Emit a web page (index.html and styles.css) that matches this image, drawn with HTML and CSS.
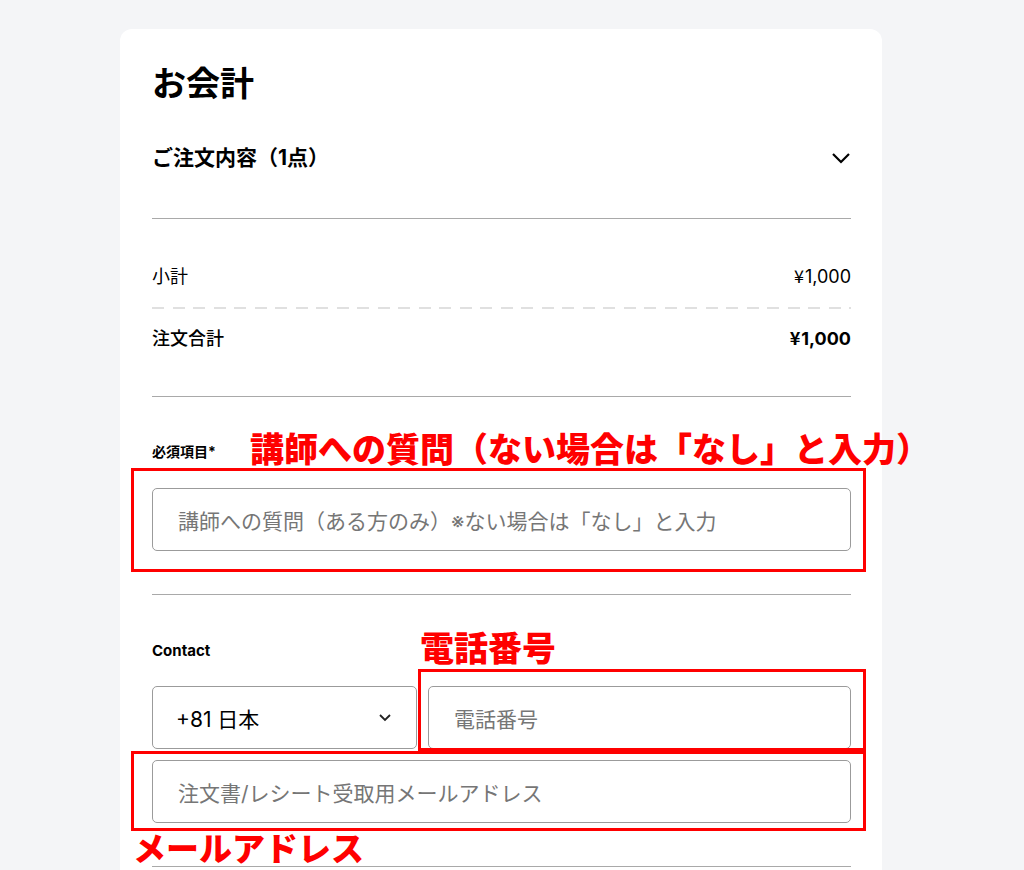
FILE: index.html
```html
<!DOCTYPE html>
<html lang="ja">
<head>
    <meta charset="UTF-8">
    <title>お会計</title>
    <link rel="stylesheet" href="styles.css">
</head>
<body>
<div class="card">
    <h1 class="title">お会計</h1>

    <div class="order-toggle">
        <span>ご注文内容（1点）</span>
        <svg class="chevron" width="20" height="12" viewBox="0 0 20 12">
            <polyline points="2,2 10,10 18,2" fill="none" stroke="#000" stroke-width="2.2"/>
        </svg>
    </div>

    <div class="totals">
        <div class="row">
            <span>小計</span>
            <span><span class="yen">¥</span>1,000</span>
        </div>
        <div class="dash"></div>
        <div class="row total">
            <span>注文合計</span>
            <span class="price"><span class="yen">¥</span>1,000</span>
        </div>
    </div>

    <div class="section question">
        <div class="label">必須項目*</div>
        <div class="field">講師への質問（ある方のみ）※ない場合は「なし」と入力</div>
    </div>

    <div class="section contact">
        <div class="label">Contact</div>
        <div class="phone-row">
            <div class="field select">
                <span class="value">+81 日本</span>
                <svg width="14" height="9" viewBox="0 0 14 9">
                    <polyline points="2,2 7,7 12,2" fill="none" stroke="#222" stroke-width="1.8"/>
                </svg>
            </div>
            <div class="field phone">電話番号</div>
        </div>
        <div class="field">注文書/レシート受取用メールアドレス</div>
    </div>

    <!-- 注釈 -->
    <div class="note note-question">講師への質問（ない場合は「なし」と入力）</div>
    <div class="mark mark-question"></div>
    <div class="note note-phone">電話番号</div>
    <div class="mark mark-phone"></div>
    <div class="mark mark-mail"></div>
    <div class="note note-mail">メールアドレス</div>
</div>
</body>
</html>
```

FILE: styles.css
```css
* {
    margin: 0;
    padding: 0;
    box-sizing: border-box;
}

body {
    background: #f4f5f7;
    font-family: "Inter", "Noto Sans CJK JP", sans-serif;
    color: #000;
    height: 870px;
    overflow: hidden;
}

.card {
    position: relative;
    width: 762px;
    margin: 29px 0 0 120px;
    padding: 35px 31px 40px 32px;
    background: #fff;
    border-radius: 12px;
}

.title {
    font-size: 34px;
    line-height: 40px;
    font-weight: 700;
}

.order-toggle {
    display: flex;
    justify-content: space-between;
    align-items: center;
    padding: 42px 0 48px;
    font-size: 21px;
    line-height: 24px;
    font-weight: 700;
    border-bottom: 1px solid #a9a9a9;
}

.totals {
    padding: 46px 0 45px;
    border-bottom: 1px solid #a9a9a9;
}

.row {
    display: flex;
    justify-content: space-between;
    align-items: center;
    height: 24px;
    font-size: 18px;
    line-height: 24px;
}

.yen {
    font-family: "Noto Sans CJK JP", sans-serif;
    line-height: 1;
    margin-right: 1px;
}

.dash {
    height: 2px;
    margin: 18px 0;
    background: repeating-linear-gradient(to right, #e0e0e0 0 12px, transparent 12px 20.5px);
}

.row.total {
    font-weight: 500;
}

.row .price {
    font-weight: 700;
}

.section {
    border-bottom: 1px solid #a9a9a9;
}

.question {
    padding: 45px 0 43px;
}

.contact {
    padding: 46px 0 43px;
}

.label {
    font-size: 14px;
    line-height: 20px;
    font-weight: 700;
    margin-bottom: 26px;
}

.contact .label {
    font-size: 15px;
    margin-bottom: 25px;
}

.field {
    display: flex;
    align-items: center;
    height: 63px;
    padding: 0 25px;
    border: 1px solid #9b9b9b;
    border-radius: 5px;
    font-size: 21px;
    color: #767676;
}

.phone-row {
    display: flex;
    gap: 11px;
    margin-bottom: 11px;
}

.select {
    width: 265px;
    flex: none;
    justify-content: space-between;
    padding: 0 24px 0 23px;
    color: #000;
}

.phone {
    flex: 1;
}

.note {
    position: absolute;
    color: #ff0000;
    font-family: "Noto Sans CJK JP", sans-serif;
    font-weight: 900;
    font-size: 34px;
    line-height: 34px;
    white-space: nowrap;
}

.note-question {
    left: 130px;
    top: 402px;
}

.note-phone {
    left: 300px;
    top: 601px;
}

.note-mail {
    left: 13px;
    top: 802px;
    font-size: 33px;
    line-height: 32px;
}

.mark {
    position: absolute;
    border: 3px solid #ff0000;
}

.mark-question {
    left: 11px;
    top: 439px;
    width: 735px;
    height: 104px;
}

.mark-phone {
    left: 298px;
    top: 640px;
    width: 448px;
    height: 82px;
}

.mark-mail {
    left: 11px;
    top: 722px;
    width: 735px;
    height: 80px;
}
```
